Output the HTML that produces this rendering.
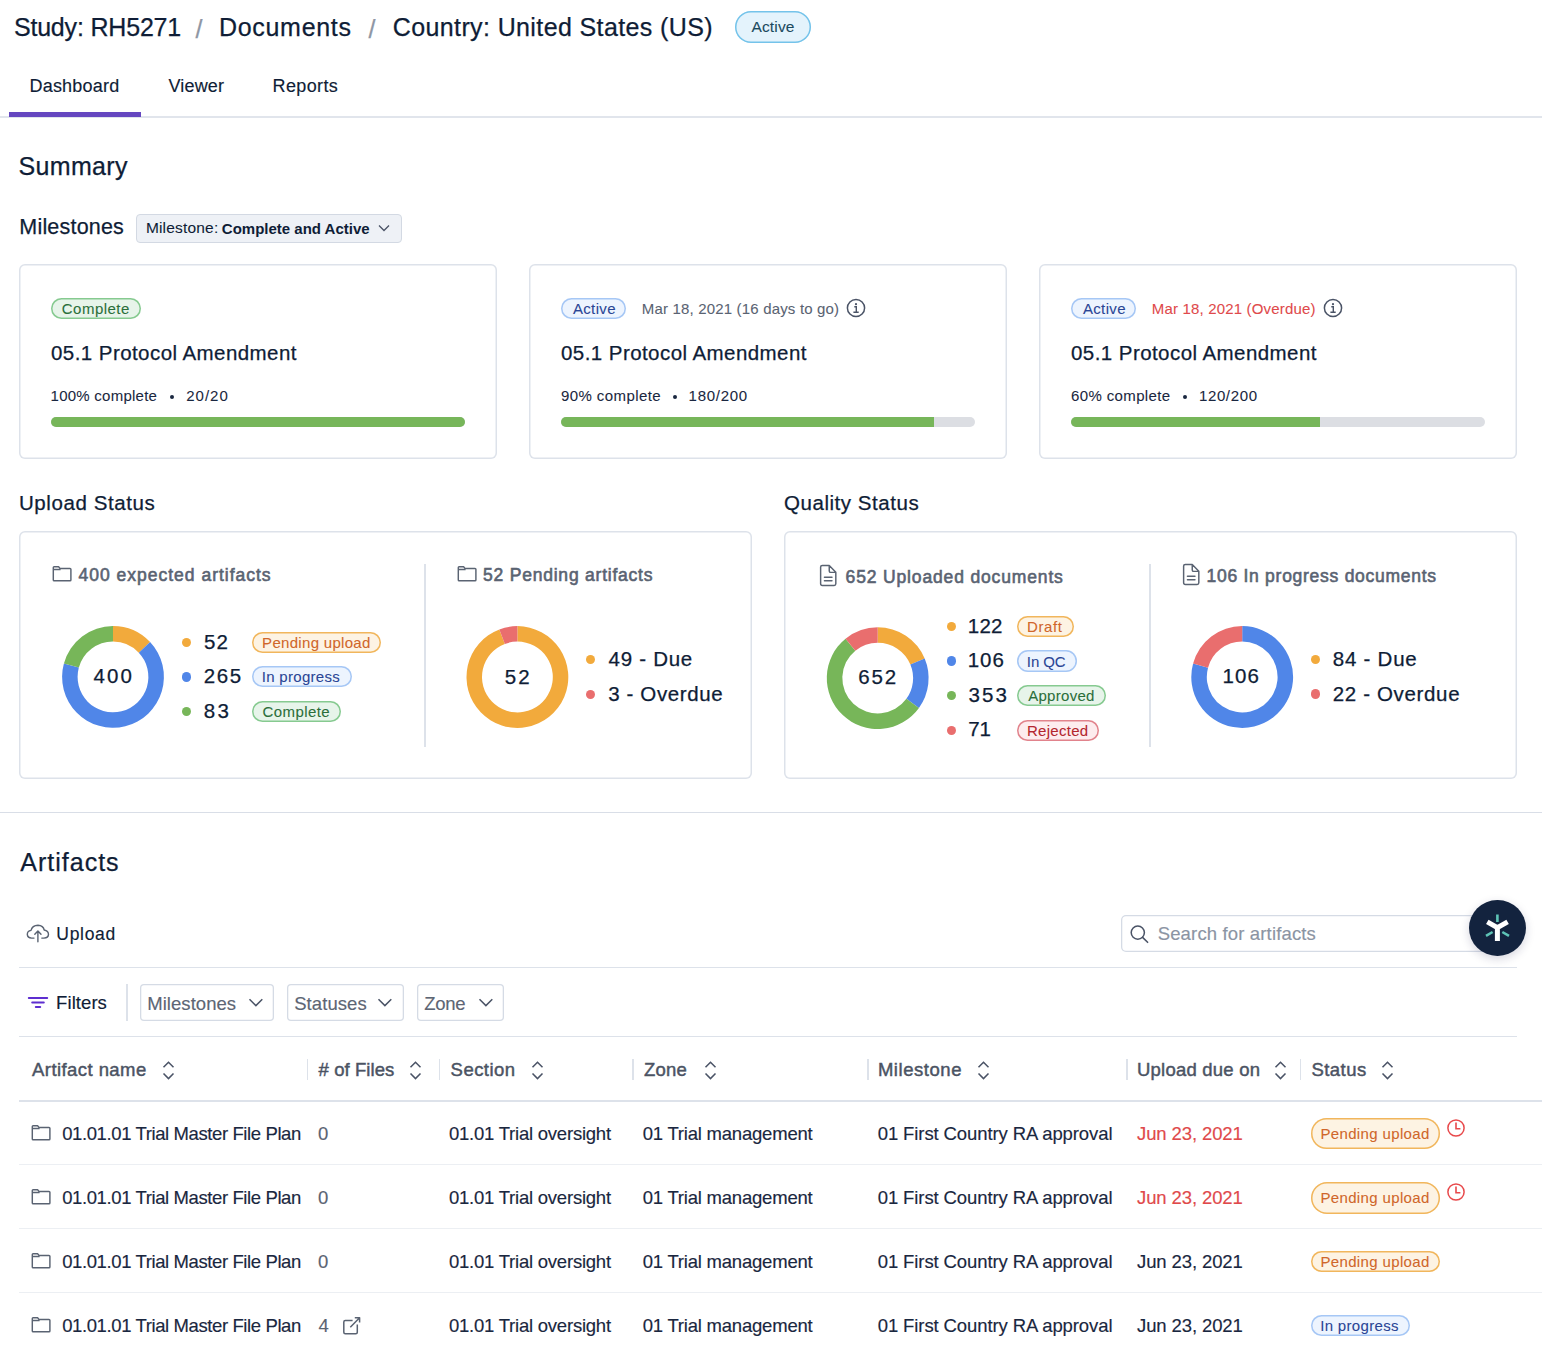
<!DOCTYPE html>
<html><head><meta charset="utf-8"><style>
html,body{margin:0;padding:0;background:#fff;width:1542px;height:1354px;overflow:hidden;position:relative;}
body{font-family:"Liberation Sans",sans-serif;}
.t{position:absolute;white-space:pre;}
svg{position:absolute;overflow:visible;}
</style></head><body>
<span class="t" style="left:13.90px;top:15.14px;font-size:25px;line-height:25px;color:#0f1d36;-webkit-text-stroke:0.25px #0f1d36;letter-spacing:-0.183px;">Study: RH5271</span>
<span class="t" style="left:195.50px;top:16.84px;font-size:25px;line-height:25px;color:#8e96a4;-webkit-text-stroke:0.25px #8e96a4;">/</span>
<span class="t" style="left:219.00px;top:15.14px;font-size:25px;line-height:25px;color:#0f1d36;-webkit-text-stroke:0.25px #0f1d36;letter-spacing:0.688px;">Documents</span>
<span class="t" style="left:368.50px;top:16.84px;font-size:25px;line-height:25px;color:#8e96a4;-webkit-text-stroke:0.25px #8e96a4;">/</span>
<span class="t" style="left:392.80px;top:15.14px;font-size:25px;line-height:25px;color:#0f1d36;-webkit-text-stroke:0.25px #0f1d36;letter-spacing:0.381px;">Country: United States (US)</span>
<div style="position:absolute;left:735px;top:11px;width:76px;height:32px;box-sizing:border-box;box-shadow:inset 0 0 0 1.5px #74c3ea;background:#e4f3fc;border-radius:16px;"></div>
<span class="t" style="left:751.50px;top:19.28px;font-size:15.5px;line-height:15.5px;color:#1b4a5e;-webkit-text-stroke:0.08px #1b4a5e;letter-spacing:0.140px;">Active</span>
<span class="t" style="left:29.50px;top:77.06px;font-size:18px;line-height:18px;color:#0f1d36;-webkit-text-stroke:0.15px #0f1d36;letter-spacing:0.200px;">Dashboard</span>
<span class="t" style="left:168.50px;top:77.06px;font-size:18px;line-height:18px;color:#0f1d36;-webkit-text-stroke:0.15px #0f1d36;letter-spacing:0.160px;">Viewer</span>
<span class="t" style="left:272.50px;top:77.06px;font-size:18px;line-height:18px;color:#0f1d36;-webkit-text-stroke:0.15px #0f1d36;letter-spacing:0.383px;">Reports</span>
<div style="position:absolute;left:0px;top:116px;width:1542px;height:2px;box-sizing:border-box;background:#e1e5ec;"></div>
<div style="position:absolute;left:9px;top:112px;width:132px;height:5px;box-sizing:border-box;background:#6547c0;"></div>
<span class="t" style="left:18.50px;top:154.24px;font-size:25px;line-height:25px;color:#0f1d36;-webkit-text-stroke:0.25px #0f1d36;letter-spacing:0.333px;">Summary</span>
<span class="t" style="left:19.30px;top:216.70px;font-size:21.5px;line-height:21.5px;color:#0f1d36;-webkit-text-stroke:0.25px #0f1d36;letter-spacing:0.200px;">Milestones</span>
<div style="position:absolute;left:136px;top:214px;width:266px;height:29px;box-sizing:border-box;border:1px solid #d3d9e3;background:#eef1f6;border-radius:4px;"></div>
<span class="t" style="left:145.90px;top:220.28px;font-size:15.5px;line-height:15.5px;color:#0f1d36;-webkit-text-stroke:0.08px #0f1d36;letter-spacing:0.189px;">Milestone:</span>
<span class="t" style="left:221.80px;top:220.70px;font-size:15px;line-height:15px;color:#0f1d36;-webkit-text-stroke:0.08px #0f1d36;font-weight:bold;-webkit-text-stroke:0;">Complete and Active</span>
<svg style="left:378px;top:224px" width="12" height="8" viewBox="0 0 12 8"><path d="M1 1.5 L6 6.5 L11 1.5" fill="none" stroke="#4a5366" stroke-width="1.3"/></svg>
<div style="position:absolute;left:19px;top:264px;width:478px;height:195px;box-sizing:border-box;box-shadow:inset 0 0 0 1.5px #dde2ea;border-radius:6px;background:#fff;"></div>
<div style="position:absolute;left:51px;top:298px;width:90px;height:21px;box-sizing:border-box;box-shadow:inset 0 0 0 1.5px #86ca90;background:#e7f4ea;border-radius:10.5px;"></div>
<span class="t" style="left:61.80px;top:301.20px;font-size:15px;line-height:15px;color:#2b6e3a;-webkit-text-stroke:0.08px #2b6e3a;letter-spacing:0.471px;">Complete</span>
<span class="t" style="left:51.00px;top:343.25px;font-size:20.5px;line-height:20.5px;color:#0f1d36;-webkit-text-stroke:0.25px #0f1d36;letter-spacing:0.436px;">05.1 Protocol Amendment</span>
<span class="t" style="left:50.60px;top:388.20px;font-size:15px;line-height:15px;color:#1a2740;-webkit-text-stroke:0.08px #1a2740;letter-spacing:0.242px;">100% complete</span>
<div style="position:absolute;left:170.1px;top:394.6px;width:4px;height:4px;box-sizing:border-box;background:#1a2740;border-radius:2px;"></div>
<span class="t" style="left:186.30px;top:388.20px;font-size:15px;line-height:15px;color:#1a2740;-webkit-text-stroke:0.08px #1a2740;letter-spacing:0.975px;">20/20</span>
<div style="position:absolute;left:51.2px;top:416.7px;width:414px;height:10.6px;box-sizing:border-box;background:#dcdee3;border-radius:5.3px;overflow:hidden;"></div>
<div style="position:absolute;left:51.2px;top:416.7px;width:414.0px;height:10.6px;background:#77b65a;border-radius:5.3px 0 0 5.3px;border-radius:5.3px;"></div>
<div style="position:absolute;left:529px;top:264px;width:478px;height:195px;box-sizing:border-box;box-shadow:inset 0 0 0 1.5px #dde2ea;border-radius:6px;background:#fff;"></div>
<div style="position:absolute;left:561px;top:298px;width:65px;height:21px;box-sizing:border-box;box-shadow:inset 0 0 0 1.5px #a6c7f5;background:#edf4fe;border-radius:10.5px;"></div>
<span class="t" style="left:572.90px;top:301.20px;font-size:15px;line-height:15px;color:#2a4595;-webkit-text-stroke:0.08px #2a4595;letter-spacing:0.360px;">Active</span>
<span class="t" style="left:641.80px;top:300.90px;font-size:15px;line-height:15px;color:#5a6372;-webkit-text-stroke:0.08px #5a6372;letter-spacing:0.174px;">Mar 18, 2021 (16 days to go)</span>
<svg style="left:846px;top:298px" width="20" height="20" viewBox="0 0 20 20"><circle cx="10" cy="10" r="8.6" fill="none" stroke="#4a5366" stroke-width="1.5"/><circle cx="10" cy="6.2" r="1.1" fill="#4a5366"/><path d="M8.3 8.8 H10.3 V14.3 M7.4 14.3 H12.7" fill="none" stroke="#4a5366" stroke-width="1.4"/></svg>
<span class="t" style="left:561.00px;top:343.25px;font-size:20.5px;line-height:20.5px;color:#0f1d36;-webkit-text-stroke:0.25px #0f1d36;letter-spacing:0.436px;">05.1 Protocol Amendment</span>
<span class="t" style="left:561.00px;top:388.20px;font-size:15px;line-height:15px;color:#1a2740;-webkit-text-stroke:0.08px #1a2740;letter-spacing:0.409px;">90% complete</span>
<div style="position:absolute;left:673.4px;top:394.6px;width:4px;height:4px;box-sizing:border-box;background:#1a2740;border-radius:2px;"></div>
<span class="t" style="left:688.60px;top:388.20px;font-size:15px;line-height:15px;color:#1a2740;-webkit-text-stroke:0.08px #1a2740;letter-spacing:0.717px;">180/200</span>
<div style="position:absolute;left:561.2px;top:416.7px;width:414px;height:10.6px;box-sizing:border-box;background:#dcdee3;border-radius:5.3px;overflow:hidden;"></div>
<div style="position:absolute;left:561.2px;top:416.7px;width:372.6px;height:10.6px;background:#77b65a;border-radius:5.3px 0 0 5.3px;"></div>
<div style="position:absolute;left:1039px;top:264px;width:478px;height:195px;box-sizing:border-box;box-shadow:inset 0 0 0 1.5px #dde2ea;border-radius:6px;background:#fff;"></div>
<div style="position:absolute;left:1071px;top:298px;width:65px;height:21px;box-sizing:border-box;box-shadow:inset 0 0 0 1.5px #a6c7f5;background:#edf4fe;border-radius:10.5px;"></div>
<span class="t" style="left:1082.90px;top:301.20px;font-size:15px;line-height:15px;color:#2a4595;-webkit-text-stroke:0.08px #2a4595;letter-spacing:0.360px;">Active</span>
<span class="t" style="left:1151.80px;top:300.90px;font-size:15px;line-height:15px;color:#e0494b;-webkit-text-stroke:0.08px #e0494b;letter-spacing:0.171px;">Mar 18, 2021 (Overdue)</span>
<svg style="left:1322.6px;top:298px" width="20" height="20" viewBox="0 0 20 20"><circle cx="10" cy="10" r="8.6" fill="none" stroke="#4a5366" stroke-width="1.5"/><circle cx="10" cy="6.2" r="1.1" fill="#4a5366"/><path d="M8.3 8.8 H10.3 V14.3 M7.4 14.3 H12.7" fill="none" stroke="#4a5366" stroke-width="1.4"/></svg>
<span class="t" style="left:1071.00px;top:343.25px;font-size:20.5px;line-height:20.5px;color:#0f1d36;-webkit-text-stroke:0.25px #0f1d36;letter-spacing:0.436px;">05.1 Protocol Amendment</span>
<span class="t" style="left:1071.00px;top:388.20px;font-size:15px;line-height:15px;color:#1a2740;-webkit-text-stroke:0.08px #1a2740;letter-spacing:0.373px;">60% complete</span>
<div style="position:absolute;left:1183px;top:394.6px;width:4px;height:4px;box-sizing:border-box;background:#1a2740;border-radius:2px;"></div>
<span class="t" style="left:1198.90px;top:388.20px;font-size:15px;line-height:15px;color:#1a2740;-webkit-text-stroke:0.08px #1a2740;letter-spacing:0.650px;">120/200</span>
<div style="position:absolute;left:1071.2px;top:416.7px;width:414px;height:10.6px;box-sizing:border-box;background:#dcdee3;border-radius:5.3px;overflow:hidden;"></div>
<div style="position:absolute;left:1071.2px;top:416.7px;width:248.4px;height:10.6px;background:#77b65a;border-radius:5.3px 0 0 5.3px;"></div>
<span class="t" style="left:18.90px;top:492.65px;font-size:20.5px;line-height:20.5px;color:#0f1d36;-webkit-text-stroke:0.25px #0f1d36;letter-spacing:0.592px;">Upload Status</span>
<span class="t" style="left:784.00px;top:492.65px;font-size:20.5px;line-height:20.5px;color:#0f1d36;-webkit-text-stroke:0.25px #0f1d36;letter-spacing:0.546px;">Quality Status</span>
<div style="position:absolute;left:19px;top:531px;width:733px;height:248px;box-sizing:border-box;box-shadow:inset 0 0 0 1.5px #dde2ea;border-radius:6px;"></div>
<div style="position:absolute;left:784px;top:531px;width:733px;height:248px;box-sizing:border-box;box-shadow:inset 0 0 0 1.5px #dde2ea;border-radius:6px;"></div>
<div style="position:absolute;left:424px;top:564px;width:1.5px;height:183px;box-sizing:border-box;background:#dde2ea;"></div>
<div style="position:absolute;left:1149px;top:564px;width:1.5px;height:183px;box-sizing:border-box;background:#dde2ea;"></div>
<svg style="left:52px;top:566.3px" width="20" height="15.5" viewBox="0 0 20 15.5"><path d="M1.3 3.4 V1.6 Q1.3 0.75 2.1 0.75 H6.6 L8 2.4 H18 Q18.9 2.4 18.9 3.3 V13.9 Q18.9 14.75 18 14.75 H2.1 Q1.3 14.75 1.3 13.9 Z M1.3 3.4 H8.6" fill="none" stroke="#5a6372" stroke-width="1.45" stroke-linejoin="round"/></svg>
<span class="t" style="left:78.60px;top:567.39px;font-size:17.5px;line-height:17.5px;color:#5a6372;-webkit-text-stroke:0.6px #5a6372;letter-spacing:0.990px;">400 expected artifacts</span>
<svg style="left:456.6px;top:566.3px" width="20" height="15.5" viewBox="0 0 20 15.5"><path d="M1.3 3.4 V1.6 Q1.3 0.75 2.1 0.75 H6.6 L8 2.4 H18 Q18.9 2.4 18.9 3.3 V13.9 Q18.9 14.75 18 14.75 H2.1 Q1.3 14.75 1.3 13.9 Z M1.3 3.4 H8.6" fill="none" stroke="#5a6372" stroke-width="1.45" stroke-linejoin="round"/></svg>
<span class="t" style="left:483.10px;top:567.39px;font-size:17.5px;line-height:17.5px;color:#5a6372;-webkit-text-stroke:0.6px #5a6372;letter-spacing:0.774px;">52 Pending artifacts</span>
<svg style="left:819.8px;top:564.8px" width="18" height="22" viewBox="0 0 18 22"><path d="M5.5 4.6 H12.6 L19.3 11.7 V23.3 Q19.3 25 17.6 25 H5.5 Q3.8 25 3.8 23.3 V6.3 Q3.8 4.6 5.5 4.6 Z M12.6 4.6 V10.2 Q12.6 11.7 14.1 11.7 H19.3 M7.7 16.6 H15.4 M7.7 20.3 H15.4" transform="translate(-3.1,-4.1) scale(0.98)" fill="none" stroke="#5a6372" stroke-width="1.5" stroke-linejoin="round" stroke-linecap="round"/></svg>
<span class="t" style="left:845.60px;top:568.69px;font-size:17.5px;line-height:17.5px;color:#5a6372;-webkit-text-stroke:0.6px #5a6372;letter-spacing:0.848px;">652 Uploaded documents</span>
<svg style="left:1183.2px;top:564px" width="18" height="22" viewBox="0 0 18 22"><path d="M5.5 4.6 H12.6 L19.3 11.7 V23.3 Q19.3 25 17.6 25 H5.5 Q3.8 25 3.8 23.3 V6.3 Q3.8 4.6 5.5 4.6 Z M12.6 4.6 V10.2 Q12.6 11.7 14.1 11.7 H19.3 M7.7 16.6 H15.4 M7.7 20.3 H15.4" transform="translate(-3.1,-4.1) scale(0.98)" fill="none" stroke="#5a6372" stroke-width="1.5" stroke-linejoin="round" stroke-linecap="round"/></svg>
<span class="t" style="left:1206.50px;top:567.69px;font-size:17.5px;line-height:17.5px;color:#5a6372;-webkit-text-stroke:0.6px #5a6372;letter-spacing:0.729px;">106 In progress documents</span>
<svg style="left:0;top:0" width="1542" height="1354"><path d="M113.00 626.00 A50.9 50.9 0 0 1 150.10 642.06 L138.81 652.67 A35.4 35.4 0 0 0 113.00 641.50Z" fill="#f2aa3c"/><path d="M150.10 642.06 A50.9 50.9 0 1 1 63.90 663.47 L78.85 667.56 A35.4 35.4 0 1 0 138.81 652.67Z" fill="#5086e8"/><path d="M63.90 663.47 A50.9 50.9 0 0 1 113.00 626.00 L113.00 641.50 A35.4 35.4 0 0 0 78.85 667.56Z" fill="#77b659"/></svg>
<svg style="left:0;top:0" width="1542" height="1354"><path d="M517.40 626.10 A50.9 50.9 0 1 1 499.35 629.41 L504.85 643.90 A35.4 35.4 0 1 0 517.40 641.60Z" fill="#f2aa3c"/><path d="M499.35 629.41 A50.9 50.9 0 0 1 517.40 626.10 L517.40 641.60 A35.4 35.4 0 0 0 504.85 643.90Z" fill="#e96e6e"/></svg>
<svg style="left:0;top:0" width="1542" height="1354"><path d="M877.70 627.20 A50.9 50.9 0 0 1 924.68 658.51 L910.37 664.47 A35.4 35.4 0 0 0 877.70 642.70Z" fill="#f2aa3c"/><path d="M924.68 658.51 A50.9 50.9 0 0 1 918.94 707.94 L906.38 698.85 A35.4 35.4 0 0 0 910.37 664.47Z" fill="#5086e8"/><path d="M918.94 707.94 A50.9 50.9 0 1 1 845.53 638.66 L855.32 650.67 A35.4 35.4 0 1 0 906.38 698.85Z" fill="#77b659"/><path d="M845.53 638.66 A50.9 50.9 0 0 1 877.70 627.20 L877.70 642.70 A35.4 35.4 0 0 0 855.32 650.67Z" fill="#e96e6e"/></svg>
<svg style="left:0;top:0" width="1542" height="1354"><path d="M1242.20 626.10 A50.9 50.9 0 1 1 1193.10 663.58 L1208.05 667.67 A35.4 35.4 0 1 0 1242.20 641.60Z" fill="#5086e8"/><path d="M1193.10 663.58 A50.9 50.9 0 0 1 1242.20 626.10 L1242.20 641.60 A35.4 35.4 0 0 0 1208.05 667.67Z" fill="#e96e6e"/></svg>
<span class="t" style="left:93.40px;top:666.35px;font-size:20.5px;line-height:20.5px;color:#0f1d36;-webkit-text-stroke:0.25px #0f1d36;letter-spacing:2.150px;">400</span>
<span class="t" style="left:504.70px;top:666.55px;font-size:20.5px;line-height:20.5px;color:#0f1d36;-webkit-text-stroke:0.25px #0f1d36;letter-spacing:2.100px;">52</span>
<span class="t" style="left:858.30px;top:667.15px;font-size:20.5px;line-height:20.5px;color:#0f1d36;-webkit-text-stroke:0.25px #0f1d36;letter-spacing:1.800px;">652</span>
<span class="t" style="left:1222.50px;top:666.35px;font-size:20.5px;line-height:20.5px;color:#0f1d36;-webkit-text-stroke:0.25px #0f1d36;letter-spacing:1.150px;">106</span>
<div style="position:absolute;left:181.54999999999998px;top:637.5500000000001px;width:9.3px;height:9.3px;box-sizing:border-box;background:#f2aa3c;border-radius:50%;"></div>
<span class="t" style="left:203.90px;top:632.05px;font-size:20.5px;line-height:20.5px;color:#0f1d36;-webkit-text-stroke:0.25px #0f1d36;letter-spacing:1.300px;">52</span>
<div style="position:absolute;left:181.54999999999998px;top:672.25px;width:9.3px;height:9.3px;box-sizing:border-box;background:#5086e8;border-radius:50%;"></div>
<span class="t" style="left:203.70px;top:666.35px;font-size:20.5px;line-height:20.5px;color:#0f1d36;-webkit-text-stroke:0.25px #0f1d36;letter-spacing:1.600px;">265</span>
<div style="position:absolute;left:181.54999999999998px;top:706.75px;width:9.3px;height:9.3px;box-sizing:border-box;background:#77b659;border-radius:50%;"></div>
<span class="t" style="left:203.80px;top:701.05px;font-size:20.5px;line-height:20.5px;color:#0f1d36;-webkit-text-stroke:0.25px #0f1d36;letter-spacing:2.300px;">83</span>
<div style="position:absolute;left:252px;top:632px;width:129px;height:21px;box-sizing:border-box;box-shadow:inset 0 0 0 1.5px #f1b65c;background:#fdf3e3;border-radius:10.5px;"></div>
<span class="t" style="left:262.10px;top:635.30px;font-size:15px;line-height:15px;color:#d0662a;-webkit-text-stroke:0.08px #d0662a;letter-spacing:0.308px;">Pending upload</span>
<div style="position:absolute;left:252px;top:666px;width:100px;height:21px;box-sizing:border-box;box-shadow:inset 0 0 0 1.5px #a6c7f5;background:#edf4fe;border-radius:10.5px;"></div>
<span class="t" style="left:261.80px;top:669.30px;font-size:15px;line-height:15px;color:#2a4595;-webkit-text-stroke:0.08px #2a4595;letter-spacing:0.290px;">In progress</span>
<div style="position:absolute;left:252px;top:701px;width:89px;height:21px;box-sizing:border-box;box-shadow:inset 0 0 0 1.5px #86ca90;background:#e7f4ea;border-radius:10.5px;"></div>
<span class="t" style="left:262.50px;top:704.30px;font-size:15px;line-height:15px;color:#2b6e3a;-webkit-text-stroke:0.08px #2b6e3a;letter-spacing:0.414px;">Complete</span>
<div style="position:absolute;left:586.0500000000001px;top:655.0500000000001px;width:9.3px;height:9.3px;box-sizing:border-box;background:#f2aa3c;border-radius:50%;"></div>
<span class="t" style="left:608.60px;top:649.05px;font-size:20.5px;line-height:20.5px;color:#0f1d36;-webkit-text-stroke:0.25px #0f1d36;letter-spacing:0.714px;">49 - Due</span>
<div style="position:absolute;left:586.0500000000001px;top:689.85px;width:9.3px;height:9.3px;box-sizing:border-box;background:#e96e6e;border-radius:50%;"></div>
<span class="t" style="left:608.20px;top:683.75px;font-size:20.5px;line-height:20.5px;color:#0f1d36;-webkit-text-stroke:0.25px #0f1d36;letter-spacing:0.630px;">3 - Overdue</span>
<div style="position:absolute;left:946.75px;top:621.5500000000001px;width:9.3px;height:9.3px;box-sizing:border-box;background:#f2aa3c;border-radius:50%;"></div>
<span class="t" style="left:967.70px;top:615.75px;font-size:20.5px;line-height:20.5px;color:#0f1d36;-webkit-text-stroke:0.25px #0f1d36;letter-spacing:0.300px;">122</span>
<div style="position:absolute;left:946.75px;top:656.25px;width:9.3px;height:9.3px;box-sizing:border-box;background:#5086e8;border-radius:50%;"></div>
<span class="t" style="left:967.70px;top:650.45px;font-size:20.5px;line-height:20.5px;color:#0f1d36;-webkit-text-stroke:0.25px #0f1d36;letter-spacing:1.000px;">106</span>
<div style="position:absolute;left:946.75px;top:690.75px;width:9.3px;height:9.3px;box-sizing:border-box;background:#77b659;border-radius:50%;"></div>
<span class="t" style="left:968.40px;top:685.25px;font-size:20.5px;line-height:20.5px;color:#0f1d36;-webkit-text-stroke:0.25px #0f1d36;letter-spacing:2.100px;">353</span>
<div style="position:absolute;left:946.75px;top:725.75px;width:9.3px;height:9.3px;box-sizing:border-box;background:#e96e6e;border-radius:50%;"></div>
<span class="t" style="left:968.20px;top:719.45px;font-size:20.5px;line-height:20.5px;color:#0f1d36;-webkit-text-stroke:0.25px #0f1d36;">71</span>
<div style="position:absolute;left:1017px;top:616px;width:57px;height:21px;box-sizing:border-box;box-shadow:inset 0 0 0 1.5px #f1b65c;background:#fdf3e3;border-radius:10.5px;"></div>
<span class="t" style="left:1027.00px;top:619.00px;font-size:15px;line-height:15px;color:#d0662a;-webkit-text-stroke:0.08px #d0662a;letter-spacing:0.600px;">Draft</span>
<div style="position:absolute;left:1017px;top:650px;width:60px;height:22px;box-sizing:border-box;box-shadow:inset 0 0 0 1.5px #a6c7f5;background:#edf4fe;border-radius:11.0px;"></div>
<span class="t" style="left:1026.80px;top:653.50px;font-size:15px;line-height:15px;color:#2a4595;-webkit-text-stroke:0.08px #2a4595;letter-spacing:-0.075px;">In QC</span>
<div style="position:absolute;left:1017px;top:685px;width:89px;height:21px;box-sizing:border-box;box-shadow:inset 0 0 0 1.5px #86ca90;background:#e7f4ea;border-radius:10.5px;"></div>
<span class="t" style="left:1028.20px;top:688.30px;font-size:15px;line-height:15px;color:#2b6e3a;-webkit-text-stroke:0.08px #2b6e3a;letter-spacing:0.286px;">Approved</span>
<div style="position:absolute;left:1017px;top:720px;width:82px;height:21px;box-sizing:border-box;box-shadow:inset 0 0 0 1.5px #e1838c;background:#fdecee;border-radius:10.5px;"></div>
<span class="t" style="left:1027.00px;top:723.00px;font-size:15px;line-height:15px;color:#b3262f;-webkit-text-stroke:0.08px #b3262f;letter-spacing:0.271px;">Rejected</span>
<div style="position:absolute;left:1310.75px;top:654.85px;width:9.3px;height:9.3px;box-sizing:border-box;background:#f2aa3c;border-radius:50%;"></div>
<span class="t" style="left:1332.80px;top:648.85px;font-size:20.5px;line-height:20.5px;color:#0f1d36;-webkit-text-stroke:0.25px #0f1d36;letter-spacing:0.757px;">84 - Due</span>
<div style="position:absolute;left:1310.75px;top:689.45px;width:9.3px;height:9.3px;box-sizing:border-box;background:#e96e6e;border-radius:50%;"></div>
<span class="t" style="left:1332.70px;top:683.55px;font-size:20.5px;line-height:20.5px;color:#0f1d36;-webkit-text-stroke:0.25px #0f1d36;letter-spacing:0.655px;">22 - Overdue</span>
<div style="position:absolute;left:0px;top:812px;width:1542px;height:1px;box-sizing:border-box;background:#d9dee7;"></div>
<span class="t" style="left:20.30px;top:849.54px;font-size:25px;line-height:25px;color:#0f1d36;-webkit-text-stroke:0.25px #0f1d36;letter-spacing:1.000px;">Artifacts</span>
<svg style="left:26px;top:922px" width="24" height="22" viewBox="0 0 24 22"><path d="M8 16.1 H5.6 Q1.6 16.1 1.3 12.4 Q1.3 9 5 8.4 Q6.2 3.4 12 3.2 Q17.3 3.4 18.2 8 Q22.4 8.8 22.5 12.4 Q22.3 16.1 17.9 16.1 H15.8 M11.9 19.7 V9.4 M8.8 12.3 L11.9 9 L15 12.3" fill="none" stroke="#5a6372" stroke-width="1.4" stroke-linecap="round" stroke-linejoin="round"/></svg>
<span class="t" style="left:56.30px;top:926.19px;font-size:17.5px;line-height:17.5px;color:#0f1d36;-webkit-text-stroke:0.15px #0f1d36;letter-spacing:0.700px;">Upload</span>
<div style="position:absolute;left:1121px;top:915px;width:375px;height:37px;box-sizing:border-box;box-shadow:inset 0 0 0 1.3px #d5dbe5;border-radius:5px;background:#fff;"></div>
<svg style="left:1129px;top:924px" width="21" height="20" viewBox="0 0 21 20"><circle cx="8.8" cy="8.6" r="6.6" fill="none" stroke="#4a5366" stroke-width="1.5"/><path d="M13.6 13.4 L18.6 18.3" stroke="#4a5366" stroke-width="1.6" stroke-linecap="round"/></svg>
<span class="t" style="left:1157.70px;top:924.84px;font-size:18.5px;line-height:18.5px;color:#8b94a3;-webkit-text-stroke:0.15px #8b94a3;letter-spacing:0.153px;">Search for artifacts</span>
<div style="position:absolute;left:19.4px;top:966.5px;width:1498px;height:1.5px;box-sizing:border-box;background:#dde2ea;"></div>
<svg style="left:27px;top:996px" width="22" height="14" viewBox="0 0 22 14"><path d="M1.8 1.9 H20.2 M5.2 6.5 H16.8 M8.8 11.1 H13.2" stroke="#5e2ed0" stroke-width="2" stroke-linecap="round"/></svg>
<span class="t" style="left:56.10px;top:993.64px;font-size:18.5px;line-height:18.5px;color:#0f1d36;-webkit-text-stroke:0.15px #0f1d36;letter-spacing:0.067px;">Filters</span>
<div style="position:absolute;left:126.3px;top:984px;width:1.5px;height:37px;box-sizing:border-box;background:#dde2ea;"></div>
<div style="position:absolute;left:140.4px;top:984.3px;width:133.29999999999998px;height:36.6px;box-sizing:border-box;box-shadow:inset 0 0 0 1.3px #d5dbe5;border-radius:4px;background:#fff;"></div>
<span class="t" style="left:147.20px;top:994.94px;font-size:18.5px;line-height:18.5px;color:#5d6574;-webkit-text-stroke:0.15px #5d6574;letter-spacing:0.056px;">Milestones</span>
<svg style="left:248.4px;top:997px" width="16" height="11" viewBox="0 0 16 11"><path d="M1.5 2.2 L7.9 8.6 L14.3 2.2" fill="none" stroke="#4a5366" stroke-width="1.5"/></svg>
<div style="position:absolute;left:286.7px;top:984.3px;width:117.0px;height:36.6px;box-sizing:border-box;box-shadow:inset 0 0 0 1.3px #d5dbe5;border-radius:4px;background:#fff;"></div>
<span class="t" style="left:294.20px;top:994.94px;font-size:18.5px;line-height:18.5px;color:#5d6574;-webkit-text-stroke:0.15px #5d6574;letter-spacing:0.071px;">Statuses</span>
<svg style="left:376.7px;top:997px" width="16" height="11" viewBox="0 0 16 11"><path d="M1.5 2.2 L7.9 8.6 L14.3 2.2" fill="none" stroke="#4a5366" stroke-width="1.5"/></svg>
<div style="position:absolute;left:416.5px;top:984.3px;width:87.0px;height:36.6px;box-sizing:border-box;box-shadow:inset 0 0 0 1.3px #d5dbe5;border-radius:4px;background:#fff;"></div>
<span class="t" style="left:424.20px;top:994.94px;font-size:18.5px;line-height:18.5px;color:#5d6574;-webkit-text-stroke:0.15px #5d6574;letter-spacing:-0.300px;">Zone</span>
<svg style="left:478px;top:997px" width="16" height="11" viewBox="0 0 16 11"><path d="M1.5 2.2 L7.9 8.6 L14.3 2.2" fill="none" stroke="#4a5366" stroke-width="1.5"/></svg>
<div style="position:absolute;left:19.4px;top:1035.8px;width:1498px;height:1.5px;box-sizing:border-box;background:#dde2ea;"></div>
<span class="t" style="left:32.10px;top:1061.24px;font-size:18.5px;line-height:18.5px;color:#4b5363;-webkit-text-stroke:0.45px #4b5363;letter-spacing:0.425px;">Artifact name</span>
<svg style="left:161.7px;top:1059.5px" width="13" height="21" viewBox="0 0 13 21"><path d="M1.5 7.3 L6.5 2.2 L11.5 7.3 M1.5 13.4 L6.5 18.6 L11.5 13.4" fill="none" stroke="#4a5366" stroke-width="1.5"/></svg>
<span class="t" style="left:318.60px;top:1061.24px;font-size:18.5px;line-height:18.5px;color:#4b5363;-webkit-text-stroke:0.45px #4b5363;letter-spacing:0.067px;"># of Files</span>
<svg style="left:409.3px;top:1059.5px" width="13" height="21" viewBox="0 0 13 21"><path d="M1.5 7.3 L6.5 2.2 L11.5 7.3 M1.5 13.4 L6.5 18.6 L11.5 13.4" fill="none" stroke="#4a5366" stroke-width="1.5"/></svg>
<span class="t" style="left:450.60px;top:1061.24px;font-size:18.5px;line-height:18.5px;color:#4b5363;-webkit-text-stroke:0.45px #4b5363;letter-spacing:0.467px;">Section</span>
<svg style="left:530.5px;top:1059.5px" width="13" height="21" viewBox="0 0 13 21"><path d="M1.5 7.3 L6.5 2.2 L11.5 7.3 M1.5 13.4 L6.5 18.6 L11.5 13.4" fill="none" stroke="#4a5366" stroke-width="1.5"/></svg>
<span class="t" style="left:643.90px;top:1061.24px;font-size:18.5px;line-height:18.5px;color:#4b5363;-webkit-text-stroke:0.45px #4b5363;letter-spacing:0.267px;">Zone</span>
<svg style="left:703.5px;top:1059.5px" width="13" height="21" viewBox="0 0 13 21"><path d="M1.5 7.3 L6.5 2.2 L11.5 7.3 M1.5 13.4 L6.5 18.6 L11.5 13.4" fill="none" stroke="#4a5366" stroke-width="1.5"/></svg>
<span class="t" style="left:877.90px;top:1061.24px;font-size:18.5px;line-height:18.5px;color:#4b5363;-webkit-text-stroke:0.45px #4b5363;letter-spacing:0.550px;">Milestone</span>
<svg style="left:977.0px;top:1059.5px" width="13" height="21" viewBox="0 0 13 21"><path d="M1.5 7.3 L6.5 2.2 L11.5 7.3 M1.5 13.4 L6.5 18.6 L11.5 13.4" fill="none" stroke="#4a5366" stroke-width="1.5"/></svg>
<span class="t" style="left:1137.00px;top:1061.24px;font-size:18.5px;line-height:18.5px;color:#4b5363;-webkit-text-stroke:0.45px #4b5363;letter-spacing:0.225px;">Upload due on</span>
<svg style="left:1274.2px;top:1059.5px" width="13" height="21" viewBox="0 0 13 21"><path d="M1.5 7.3 L6.5 2.2 L11.5 7.3 M1.5 13.4 L6.5 18.6 L11.5 13.4" fill="none" stroke="#4a5366" stroke-width="1.5"/></svg>
<span class="t" style="left:1311.40px;top:1061.24px;font-size:18.5px;line-height:18.5px;color:#4b5363;-webkit-text-stroke:0.45px #4b5363;letter-spacing:0.460px;">Status</span>
<svg style="left:1380.5px;top:1059.5px" width="13" height="21" viewBox="0 0 13 21"><path d="M1.5 7.3 L6.5 2.2 L11.5 7.3 M1.5 13.4 L6.5 18.6 L11.5 13.4" fill="none" stroke="#4a5366" stroke-width="1.5"/></svg>
<div style="position:absolute;left:306.5px;top:1059px;width:1.5px;height:21px;box-sizing:border-box;background:#dde2ea;"></div>
<div style="position:absolute;left:438.7px;top:1059px;width:1.5px;height:21px;box-sizing:border-box;background:#dde2ea;"></div>
<div style="position:absolute;left:632px;top:1059px;width:1.5px;height:21px;box-sizing:border-box;background:#dde2ea;"></div>
<div style="position:absolute;left:867.3px;top:1059px;width:1.5px;height:21px;box-sizing:border-box;background:#dde2ea;"></div>
<div style="position:absolute;left:1126.4px;top:1059px;width:1.5px;height:21px;box-sizing:border-box;background:#dde2ea;"></div>
<div style="position:absolute;left:1299.6px;top:1059px;width:1.5px;height:21px;box-sizing:border-box;background:#dde2ea;"></div>
<div style="position:absolute;left:19px;top:1100px;width:1523px;height:1.5px;box-sizing:border-box;background:#dde2ea;"></div>
<svg style="left:31px;top:1125.4px" width="20" height="15.5" viewBox="0 0 20 15.5"><path d="M1.3 3.4 V1.6 Q1.3 0.75 2.1 0.75 H6.6 L8 2.4 H18 Q18.9 2.4 18.9 3.3 V13.9 Q18.9 14.75 18 14.75 H2.1 Q1.3 14.75 1.3 13.9 Z M1.3 3.4 H8.6" fill="none" stroke="#5a6372" stroke-width="1.45" stroke-linejoin="round"/></svg>
<span class="t" style="left:62.20px;top:1125.34px;font-size:18.5px;line-height:18.5px;color:#1a2740;-webkit-text-stroke:0.15px #1a2740;letter-spacing:-0.393px;">01.01.01 Trial Master File Plan</span>
<span class="t" style="left:318.10px;top:1125.34px;font-size:18.5px;line-height:18.5px;color:#5a6372;-webkit-text-stroke:0.15px #5a6372;">0</span>
<span class="t" style="left:448.90px;top:1125.34px;font-size:18.5px;line-height:18.5px;color:#1a2740;-webkit-text-stroke:0.15px #1a2740;letter-spacing:-0.220px;">01.01 Trial oversight</span>
<span class="t" style="left:642.70px;top:1125.34px;font-size:18.5px;line-height:18.5px;color:#1a2740;-webkit-text-stroke:0.15px #1a2740;letter-spacing:-0.211px;">01 Trial management</span>
<span class="t" style="left:877.70px;top:1125.34px;font-size:18.5px;line-height:18.5px;color:#1a2740;-webkit-text-stroke:0.15px #1a2740;letter-spacing:-0.100px;">01 First Country RA approval</span>
<span class="t" style="left:1137.00px;top:1125.34px;font-size:18.5px;line-height:18.5px;color:#e0494b;-webkit-text-stroke:0.15px #e0494b;letter-spacing:-0.109px;">Jun 23, 2021</span>
<div style="position:absolute;left:19px;top:1164.3px;width:1523px;height:1.2px;box-sizing:border-box;background:#eceff3;"></div>
<svg style="left:31px;top:1189.4px" width="20" height="15.5" viewBox="0 0 20 15.5"><path d="M1.3 3.4 V1.6 Q1.3 0.75 2.1 0.75 H6.6 L8 2.4 H18 Q18.9 2.4 18.9 3.3 V13.9 Q18.9 14.75 18 14.75 H2.1 Q1.3 14.75 1.3 13.9 Z M1.3 3.4 H8.6" fill="none" stroke="#5a6372" stroke-width="1.45" stroke-linejoin="round"/></svg>
<span class="t" style="left:62.20px;top:1189.34px;font-size:18.5px;line-height:18.5px;color:#1a2740;-webkit-text-stroke:0.15px #1a2740;letter-spacing:-0.393px;">01.01.01 Trial Master File Plan</span>
<span class="t" style="left:318.10px;top:1189.34px;font-size:18.5px;line-height:18.5px;color:#5a6372;-webkit-text-stroke:0.15px #5a6372;">0</span>
<span class="t" style="left:448.90px;top:1189.34px;font-size:18.5px;line-height:18.5px;color:#1a2740;-webkit-text-stroke:0.15px #1a2740;letter-spacing:-0.220px;">01.01 Trial oversight</span>
<span class="t" style="left:642.70px;top:1189.34px;font-size:18.5px;line-height:18.5px;color:#1a2740;-webkit-text-stroke:0.15px #1a2740;letter-spacing:-0.211px;">01 Trial management</span>
<span class="t" style="left:877.70px;top:1189.34px;font-size:18.5px;line-height:18.5px;color:#1a2740;-webkit-text-stroke:0.15px #1a2740;letter-spacing:-0.100px;">01 First Country RA approval</span>
<span class="t" style="left:1137.00px;top:1189.34px;font-size:18.5px;line-height:18.5px;color:#e0494b;-webkit-text-stroke:0.15px #e0494b;letter-spacing:-0.109px;">Jun 23, 2021</span>
<div style="position:absolute;left:19px;top:1228.3px;width:1523px;height:1.2px;box-sizing:border-box;background:#eceff3;"></div>
<svg style="left:31px;top:1253.4px" width="20" height="15.5" viewBox="0 0 20 15.5"><path d="M1.3 3.4 V1.6 Q1.3 0.75 2.1 0.75 H6.6 L8 2.4 H18 Q18.9 2.4 18.9 3.3 V13.9 Q18.9 14.75 18 14.75 H2.1 Q1.3 14.75 1.3 13.9 Z M1.3 3.4 H8.6" fill="none" stroke="#5a6372" stroke-width="1.45" stroke-linejoin="round"/></svg>
<span class="t" style="left:62.20px;top:1253.34px;font-size:18.5px;line-height:18.5px;color:#1a2740;-webkit-text-stroke:0.15px #1a2740;letter-spacing:-0.393px;">01.01.01 Trial Master File Plan</span>
<span class="t" style="left:318.10px;top:1253.34px;font-size:18.5px;line-height:18.5px;color:#5a6372;-webkit-text-stroke:0.15px #5a6372;">0</span>
<span class="t" style="left:448.90px;top:1253.34px;font-size:18.5px;line-height:18.5px;color:#1a2740;-webkit-text-stroke:0.15px #1a2740;letter-spacing:-0.220px;">01.01 Trial oversight</span>
<span class="t" style="left:642.70px;top:1253.34px;font-size:18.5px;line-height:18.5px;color:#1a2740;-webkit-text-stroke:0.15px #1a2740;letter-spacing:-0.211px;">01 Trial management</span>
<span class="t" style="left:877.70px;top:1253.34px;font-size:18.5px;line-height:18.5px;color:#1a2740;-webkit-text-stroke:0.15px #1a2740;letter-spacing:-0.100px;">01 First Country RA approval</span>
<span class="t" style="left:1137.00px;top:1253.34px;font-size:18.5px;line-height:18.5px;color:#1a2740;-webkit-text-stroke:0.15px #1a2740;letter-spacing:-0.109px;">Jun 23, 2021</span>
<div style="position:absolute;left:19px;top:1292.3px;width:1523px;height:1.2px;box-sizing:border-box;background:#eceff3;"></div>
<svg style="left:31px;top:1317.4px" width="20" height="15.5" viewBox="0 0 20 15.5"><path d="M1.3 3.4 V1.6 Q1.3 0.75 2.1 0.75 H6.6 L8 2.4 H18 Q18.9 2.4 18.9 3.3 V13.9 Q18.9 14.75 18 14.75 H2.1 Q1.3 14.75 1.3 13.9 Z M1.3 3.4 H8.6" fill="none" stroke="#5a6372" stroke-width="1.45" stroke-linejoin="round"/></svg>
<span class="t" style="left:62.20px;top:1317.34px;font-size:18.5px;line-height:18.5px;color:#1a2740;-webkit-text-stroke:0.15px #1a2740;letter-spacing:-0.393px;">01.01.01 Trial Master File Plan</span>
<span class="t" style="left:318.40px;top:1317.34px;font-size:18.5px;line-height:18.5px;color:#5a6372;-webkit-text-stroke:0.15px #5a6372;">4</span>
<svg style="left:342px;top:1316px" width="20" height="20" viewBox="0 0 20 20"><path d="M10.6 4.5 H3.3 Q1.8 4.5 1.8 6 V16.3 Q1.8 17.8 3.3 17.8 H13.8 Q15.3 17.8 15.3 16.3 V8.5 M12.8 1.8 H17.6 V6.6 M17.6 1.8 L8.3 11.3" fill="none" stroke="#5a6372" stroke-width="1.5" stroke-linejoin="round"/></svg>
<span class="t" style="left:448.90px;top:1317.34px;font-size:18.5px;line-height:18.5px;color:#1a2740;-webkit-text-stroke:0.15px #1a2740;letter-spacing:-0.220px;">01.01 Trial oversight</span>
<span class="t" style="left:642.70px;top:1317.34px;font-size:18.5px;line-height:18.5px;color:#1a2740;-webkit-text-stroke:0.15px #1a2740;letter-spacing:-0.211px;">01 Trial management</span>
<span class="t" style="left:877.70px;top:1317.34px;font-size:18.5px;line-height:18.5px;color:#1a2740;-webkit-text-stroke:0.15px #1a2740;letter-spacing:-0.100px;">01 First Country RA approval</span>
<span class="t" style="left:1137.00px;top:1317.34px;font-size:18.5px;line-height:18.5px;color:#1a2740;-webkit-text-stroke:0.15px #1a2740;letter-spacing:-0.109px;">Jun 23, 2021</span>
<div style="position:absolute;left:1311px;top:1118px;width:129px;height:31px;box-sizing:border-box;box-shadow:inset 0 0 0 1.5px #f1b65c;background:#fdf3e3;border-radius:15.5px;"></div>
<span class="t" style="left:1320.40px;top:1126.10px;font-size:15px;line-height:15px;color:#d0662a;-webkit-text-stroke:0.08px #d0662a;letter-spacing:0.362px;">Pending upload</span>
<div style="position:absolute;left:1311px;top:1182px;width:129px;height:32px;box-sizing:border-box;box-shadow:inset 0 0 0 1.5px #f1b65c;background:#fdf3e3;border-radius:16.0px;"></div>
<span class="t" style="left:1320.40px;top:1190.30px;font-size:15px;line-height:15px;color:#d0662a;-webkit-text-stroke:0.08px #d0662a;letter-spacing:0.362px;">Pending upload</span>
<svg style="left:1447px;top:1119px" width="18" height="18" viewBox="0 0 18 18"><circle cx="9" cy="9" r="8.1" fill="none" stroke="#e8494b" stroke-width="1.5"/><path d="M9 3.6 V9.8 H13.4" fill="none" stroke="#e8494b" stroke-width="1.6"/></svg>
<svg style="left:1447px;top:1183px" width="18" height="18" viewBox="0 0 18 18"><circle cx="9" cy="9" r="8.1" fill="none" stroke="#e8494b" stroke-width="1.5"/><path d="M9 3.6 V9.8 H13.4" fill="none" stroke="#e8494b" stroke-width="1.6"/></svg>
<div style="position:absolute;left:1311px;top:1251px;width:129px;height:21px;box-sizing:border-box;box-shadow:inset 0 0 0 1.5px #f1b65c;background:#fdf3e3;border-radius:10.5px;"></div>
<span class="t" style="left:1320.40px;top:1254.30px;font-size:15px;line-height:15px;color:#d0662a;-webkit-text-stroke:0.08px #d0662a;letter-spacing:0.362px;">Pending upload</span>
<div style="position:absolute;left:1311px;top:1315px;width:99px;height:21px;box-sizing:border-box;box-shadow:inset 0 0 0 1.5px #a6c7f5;background:#edf4fe;border-radius:10.5px;"></div>
<span class="t" style="left:1320.20px;top:1318.30px;font-size:15px;line-height:15px;color:#2a4595;-webkit-text-stroke:0.08px #2a4595;letter-spacing:0.330px;">In progress</span>
<div style="position:absolute;left:1469px;top:900px;width:56.5px;height:56px;border-radius:50%;background:#13233e;box-shadow:0 3px 10px rgba(30,30,80,0.18);"></div>
<svg style="left:1469px;top:900px" width="57" height="56" viewBox="1469 900 57 56"><path d="M1487.3 921.8 L1497.4 927.6 L1507.6 921.8 M1497.4 927.6 V941" fill="none" stroke="#fff" stroke-width="5"/><path d="M1497.4 914.5 V922 M1486 935.9 L1492.6 932 M1502.3 932 L1509 935.9" stroke="#5ec4b6" stroke-width="2.6"/></svg>
</body></html>
